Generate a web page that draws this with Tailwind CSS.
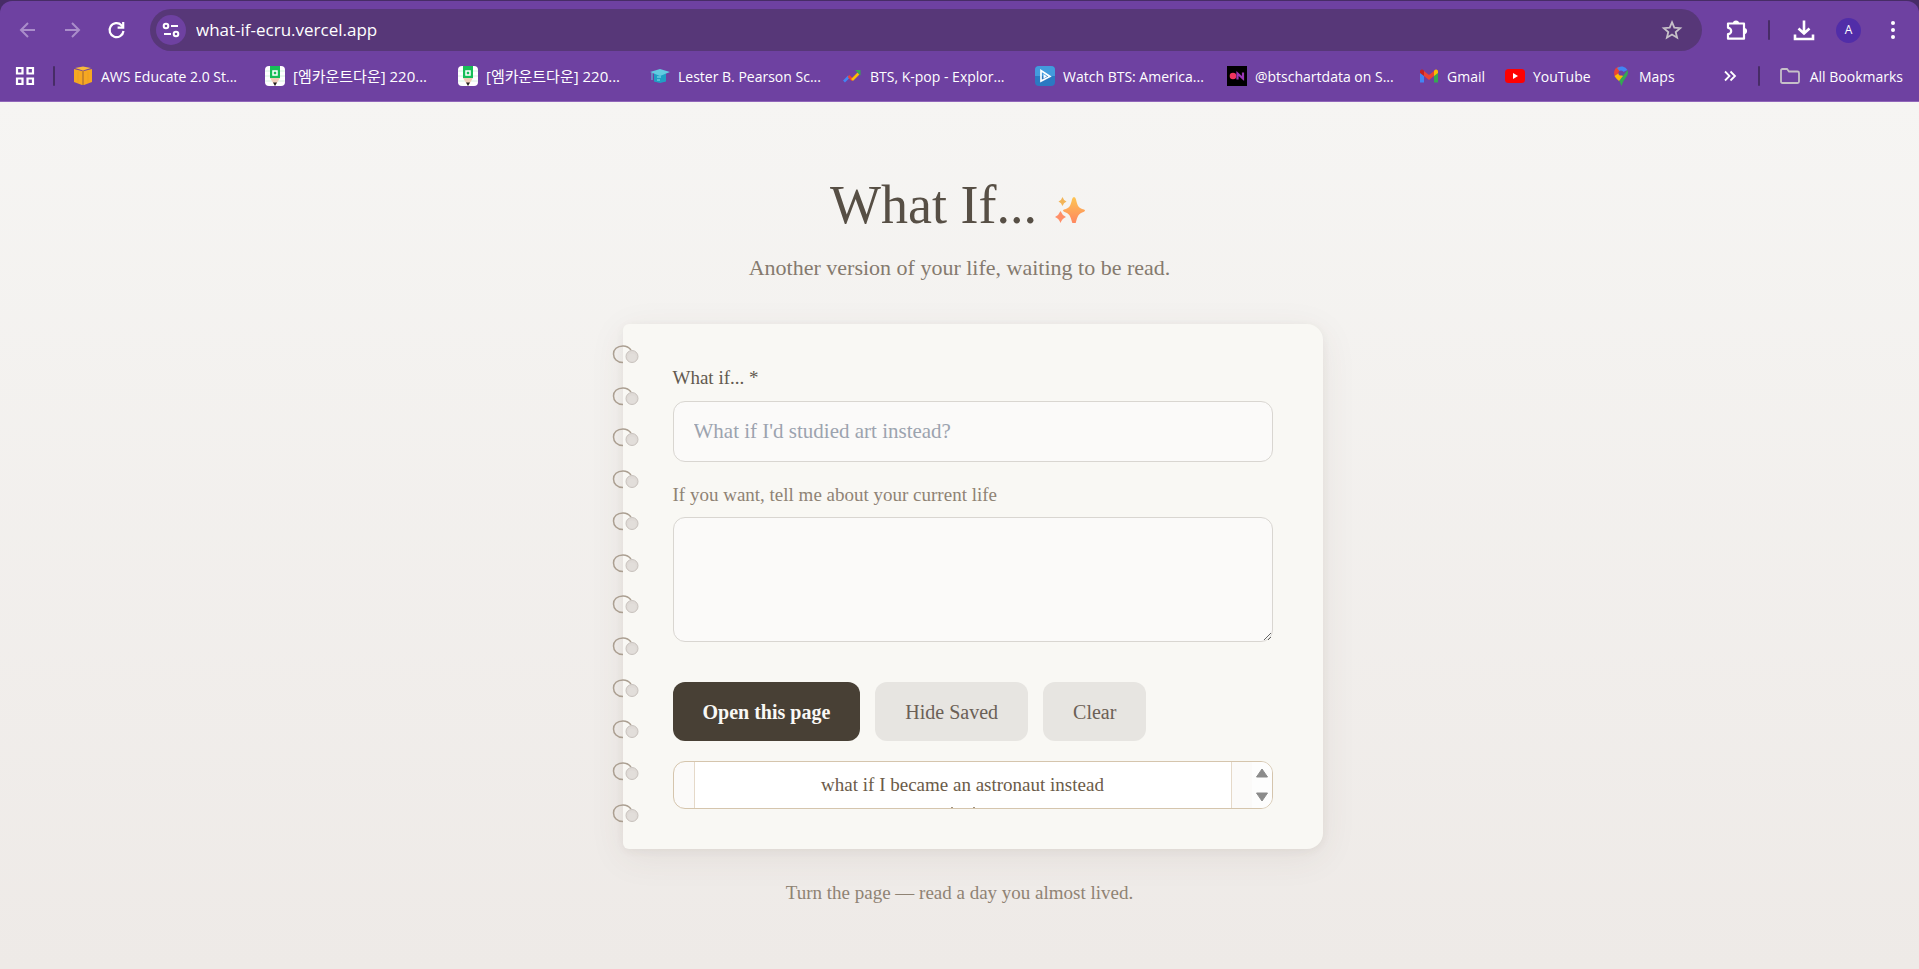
<!DOCTYPE html>
<html lang="en">
<head>
  <meta charset="UTF-8" />
  <meta name="viewport" content="width=device-width, initial-scale=1.0" />
  <title>What If...</title>
  <script src="https://cdn.jsdelivr.net/npm/@tailwindcss/browser@4"></script>
</head>
<body class="min-h-screen flex flex-col overflow-hidden bg-[#f5f4f2]">

  <!-- Browser toolbar -->
  <header class="bg-[#472c66] pt-px text-white font-['Open_Sans','Noto_Sans_CJK_KR',sans-serif]">
    <div class="bg-[#6e41a1] rounded-t-xl border-b border-[#9166ba]">
      <div class="flex items-center h-[58px] pl-4 pr-3.5">
        <button aria-label="Back" class="w-6 h-6 mr-5">
          <svg viewBox="0 0 24 24" class="w-6 h-6" fill="none" stroke="#aa8dca" stroke-width="2"><path d="M19 12H5.500M12 5l-7 7 7 7"/></svg>
        </button>
        <button aria-label="Forward" class="w-6 h-6 mr-5">
          <svg viewBox="0 0 24 24" class="w-6 h-6" fill="none" stroke="#aa8dca" stroke-width="2"><path d="M5 12h13.500M12 5l7 7-7 7"/></svg>
        </button>
        <button aria-label="Reload" class="w-6 h-6 mr-[22px]">
          <svg viewBox="0 0 24 24" class="w-6 h-6" fill="none" stroke="#fff" stroke-width="2.200"><path d="M19.500 13A7 7 0 1 1 17.500 7.200L19 9"/><path d="M19.200 4v5.600h-5.600"/></svg>
        </button>
        <div class="flex-1 flex items-center h-[42px] rounded-full bg-[#573778] px-1.5">
          <button aria-label="Site information" class="w-[30px] h-[30px] rounded-full bg-[#6e41a1] flex items-center justify-center">
            <svg viewBox="0 0 18 18" class="w-[18px] h-[18px]" fill="none" stroke="#fff" stroke-width="2"><circle cx="4" cy="5" r="2.300"/><path d="M9 5h7M2 13h7"/><circle cx="14" cy="13" r="2.300"/></svg>
          </button>
          <input type="text" aria-label="Address" value="what-if-ecru.vercel.app" class="flex-1 ml-2.5 bg-transparent text-[17px] text-white outline-none" />
          <button aria-label="Bookmark this page" class="w-6 h-6 mr-3">
            <svg viewBox="0 0 24 24" class="w-6 h-6" fill="none" stroke="#c6c0c8" stroke-width="1.800"><path d="M12 4.200l2.300 5.400 5.900.5-4.500 3.900 1.400 5.700-5.100-3.100-5.100 3.100 1.400-5.700-4.500-3.900 5.900-.5z"/></svg>
          </button>
        </div>
        <button aria-label="Extensions" class="w-6 h-6 ml-[22px]">
          <svg viewBox="0 0 24 24" class="w-6 h-6" fill="none" stroke="#fff" stroke-width="2.200" stroke-linejoin="round"><path d="M4 5.500h16v15.200H4v-4.500a3.200 3.200 0 0 0 0-6.400z"/><path d="M10 5.500a2 2 0 0 1 4 0M20 11a2 2 0 0 1 0 4" fill="#fff"/></svg>
        </button>
        <span class="w-0.5 h-5 rounded-full bg-[#472c66] ml-5"></span>
        <button aria-label="Downloads" class="w-6 h-6 ml-[22px]">
          <svg viewBox="0 0 24 24" class="w-6 h-6" fill="none" stroke="#fff" stroke-width="2.600"><path d="M12 2.500v13M6.500 10.500l5.500 5 5.500-5M3 16.500v4.500h18v-4.500"/></svg>
        </button>
        <button aria-label="Profile" class="w-[25px] h-[25px] ml-5 rounded-full bg-[#512da8] text-[12px] leading-none">A</button>
        <button aria-label="Menu" class="w-6 h-6 ml-5">
          <svg viewBox="0 0 24 24" class="w-6 h-6" fill="#fff"><circle cx="12" cy="5" r="2"/><circle cx="12" cy="12" r="2"/><circle cx="12" cy="19" r="2"/></svg>
        </button>
      </div>

      <!-- Bookmarks -->
      <nav class="flex items-center h-[42px] pb-2 pl-[15px] pr-4 text-[14px] whitespace-nowrap">
        <button aria-label="Apps" class="w-5 h-5">
          <svg viewBox="0 0 20 20" class="w-5 h-5" fill="none" stroke="#fff" stroke-width="2.200"><path d="M2 2h5.500v5.500H2zM12.500 2H18v5.500h-5.500zM2 12.500h5.500V18H2zM12.500 12.500H18V18h-5.500z"/></svg>
        </button>
        <span class="w-0.5 h-5 rounded-full bg-[#472c66] ml-[18px] mr-[18px]"></span>
        <a href="#" class="w-48 flex items-center gap-2">
          <svg viewBox="0 0 20 20" class="w-5 h-5"><path d="M1 3l8 2v14l-8-3z" fill="#f6a821"/><path d="M19 3l-8 2v14l8-3z" fill="#f6a821"/><path d="M9 4.500h2V19H9z" fill="#c9852b"/><path d="M2 2l8-1.500L18 2l-8 2.500z" fill="#f9b93a"/><path d="M5 5.500v11M15 5.500v11" stroke="#eda022"/></svg>
          AWS Educate 2.0 St...
        </a>
        <a href="#" class="w-[193px] flex items-center gap-2 text-[15px]">
          <svg viewBox="0 0 20 20" class="w-5 h-5"><rect width="20" height="20" rx="4" fill="#fff"/><path d="M0 5h20M0 10h20M0 15h20" stroke="#d5f2df"/><path d="M5 0h10v12H5z" fill="#17bd57"/><path d="M8 5h4v4H8z" fill="none" stroke="#fff" stroke-width="1.500"/><path d="M5 12h10l-5 8z" fill="#f1cdb8"/><path d="M8 16.500h4l-2 3.500z" fill="#222"/></svg>
          [엠카운트다운] 220...
        </a>
        <a href="#" class="w-48 flex items-center gap-2 text-[15px]">
          <svg viewBox="0 0 20 20" class="w-5 h-5"><rect width="20" height="20" rx="4" fill="#fff"/><path d="M0 5h20M0 10h20M0 15h20" stroke="#d5f2df"/><path d="M5 0h10v12H5z" fill="#17bd57"/><path d="M8 5h4v4H8z" fill="none" stroke="#fff" stroke-width="1.500"/><path d="M5 12h10l-5 8z" fill="#f1cdb8"/><path d="M8 16.500h4l-2 3.500z" fill="#222"/></svg>
          [엠카운트다운] 220...
        </a>
        <a href="#" class="w-48 flex items-center gap-2">
          <svg viewBox="0 0 20 20" class="w-5 h-5"><path d="M4 8h12v7.500l-6 1.500-6-1.500z" fill="#1f9fc4"/><path d="M0 6l10-3 10 3-10 4z" fill="#62cbe0"/><path d="M2 7v7" stroke="#62cbe0"/><path d="M7 11h4M7 14h3" stroke="#8ee3ef"/></svg>
          Lester B. Pearson Sc...
        </a>
        <a href="#" class="w-[193px] flex items-center gap-2">
          <svg viewBox="0 0 20 20" class="w-5 h-5" fill="none" stroke-width="2.600"><path d="M2 15.500l5-5" stroke="#4285f4"/><path d="M6.500 10l4 4" stroke="#ea4335"/><path d="M10 14l6.500-6.500" stroke="#fbbc04"/><path d="M13 4h5.500v5.500z" fill="#34a853"/></svg>
          BTS, K-pop - Explor...
        </a>
        <a href="#" class="w-48 flex items-center gap-2">
          <svg viewBox="0 0 20 20" class="w-5 h-5"><rect width="20" height="20" rx="4" fill="#2b79c2"/><path d="M0 4a4 4 0 0 1 4-4h12a4 4 0 0 1 4 4v6H0z" fill="#439bdd"/><path d="M6 4.500v10.500l9-4.500z" fill="none" stroke="#fff" stroke-width="1.700"/><path d="M8.500 8v4.500l3.500-2z" fill="#fff"/></svg>
          Watch BTS: America...
        </a>
        <a href="#" class="w-48 flex items-center gap-2">
          <svg viewBox="0 0 20 20" class="w-5 h-5"><path d="M0 0h20v20H0z" fill="#000"/><circle cx="6" cy="10" r="3.300" fill="#ef355f"/><path d="M10.500 13.500v-6l5.500 5v-6" fill="none" stroke="#9a36b5" stroke-width="2.200"/></svg>
          @btschartdata on S...
        </a>
        <a href="#" class="w-[86px] flex items-center gap-2">
          <svg viewBox="0 0 20 20" class="w-5 h-5"><path d="M1 5v11.500h4V8z" fill="#4285f4"/><path d="M19 5v11.500h-4V8z" fill="#34a853"/><path d="M5 5l5 4 5-4v5l-5 4-5-4z" fill="#ea4335"/><path d="M1 6a2 2 0 0 1 4-1v5L1 7z" fill="#c5221f"/><path d="M19 6a2 2 0 0 0-4-1v5l4-3z" fill="#fbbc04"/></svg>
          Gmail
        </a>
        <a href="#" class="w-[106px] flex items-center gap-2">
          <svg viewBox="0 0 20 20" class="w-5 h-5"><rect y="3" width="20" height="14" rx="3.500" fill="#f00"/><path d="M8 7v6l5-3z" fill="#fff"/></svg>
          YouTube
        </a>
        <a href="#" class="flex items-center gap-2">
          <svg viewBox="0 0 20 20" class="w-5 h-5"><path d="M3 7a7 7 0 0 1 5-6.500L10 7l-5 5q-2-2-2-5z" fill="#ea4335"/><path d="M6 2a7 7 0 0 1 10.500 2L10 7z" fill="#4285f4"/><path d="M16.500 4q1.500 4-2 8-3 4-4 8-1-3-2.500-5z" fill="#34a853"/><path d="M3.500 10L8 7l4 3-4 5q-3-2.500-4.500-5z" fill="#fbbc04"/><circle cx="10" cy="7" r="2.600" fill="#6e41a1"/></svg>
          Maps
        </a>
        <div class="ml-auto flex items-center">
          <button aria-label="More bookmarks" class="w-4 h-4">
            <svg viewBox="0 0 16 16" class="w-4 h-4" fill="none" stroke="#fff" stroke-width="1.800"><path d="M3 3.500L7.500 8 3 12.500M8.500 3.500L13 8l-4.500 4.500"/></svg>
          </button>
          <span class="w-0.5 h-5 rounded-full bg-[#472c66] mx-5"></span>
          <a href="#" class="flex items-center gap-2.5">
            <svg viewBox="0 0 20 20" class="w-5 h-5" fill="none" stroke="#c6c0c8" stroke-width="1.800"><path d="M1 4.500q0-1.500 1.500-1.500H7l2 2.500h8.500q1.500 0 1.500 1.500v8.500q0 1.500-1.500 1.500h-15Q1 17 1 15.500z"/></svg>
            All Bookmarks
          </a>
        </div>
      </nav>
    </div>
  </header>

  <main class="flex-1 flex flex-col items-center bg-linear-to-b from-[#f6f5f3] to-[#eeeae7] pt-[72px] pb-10 font-['Liberation_Serif',serif]">
    <h1 class="flex items-baseline gap-[18px] text-[54px] leading-[62px] text-[#574f45]">
      What If...
      <svg viewBox="0 0 34 26" class="w-[34px] h-[26px]" role="img" aria-label="sparkles">
        <defs>
          <linearGradient id="spark" x1="0" y1="0" x2="0" y2="1"><stop offset="0" stop-color="#fdc552"/><stop offset="1" stop-color="#ff8560"/></linearGradient>
        </defs>
        <path fill="url(#spark)" d="M19 0Q20.500 0 21 2.500C22.500 9 23.500 11 29 12.500Q31 13.500 29 14.700C23.500 16.500 22.500 19 21 25Q20.500 27 19 27T17 25C15.500 19 14.500 16.500 9 14.700Q7 13.500 9 12.500C14.500 11 15.500 9 17 2.500Q17.500 0 19 0z"/>
        <path fill="#f2b457" d="M7.500 0Q8.500 3.500 11.500 4.500 8.500 5.500 7.500 9 6.500 5.500 3.500 4.500 6.500 3.500 7.500 0z"/>
        <path fill="#ff8f68" d="M5.500 14Q7 18 11 20 7 21.500 5.500 26 4 21.500 0 20 4 18 5.500 14z"/>
      </svg>
    </h1>
    <p class="mt-[18px] text-[22px] leading-7 text-[#857a6e]">Another version of your life, waiting to be read.</p>

    <!-- Left padding leaves room for the rings -->
    <div class="mt-[42px] w-full max-w-[726px] pl-[26px]">
      <form class="relative px-[50px] pt-10 pb-10 bg-[#f9f8f4] rounded-l-md rounded-r-2xl shadow-[0_8px_36px_rgba(90,65,50,0.08),0_2px_8px_rgba(90,65,50,0.06)]">
        <!-- Spiral binding -->
        <div id="binding" class="absolute top-0 bottom-0 -left-3 pt-5 pb-6 flex flex-col justify-between"></div>

        <label for="what-if" class="block text-[19px] leading-7 text-[#62584f]">What if... *</label>
        <input id="what-if" type="text" placeholder="What if I'd studied art instead?" class="block w-full h-[61px] mt-[9px] px-5 rounded-xl border border-[#d9d6d1] bg-[#fbfaf9] text-[21px] placeholder:text-[#9ca3af] outline-none" />

        <label for="life" class="block mt-[19px] text-[19px] leading-7 text-[#8f8374]">If you want, tell me about your current life</label>
        <textarea id="life" class="block w-full h-[125px] mt-2 px-5 py-4 rounded-xl border border-[#d9d6d1] bg-[#fbfaf9] text-[21px] resize-y outline-none"></textarea>

        <div class="flex gap-[15px] mt-10 text-[20px]">
          <button type="submit" class="h-[59px] px-[30px] rounded-xl bg-[#484035] text-[#f9f8f4] font-semibold">Open this page</button>
          <button type="button" class="h-[59px] px-[30px] rounded-xl bg-[#e7e5e1] text-[#6b6056]">Hide Saved</button>
          <button type="button" class="h-[59px] px-[30px] rounded-xl bg-[#e7e5e1] text-[#6b6056]">Clear</button>
        </div>

        <!-- Saved pages -->
        <div class="flex h-12 mt-5 rounded-xl border border-[#d5c5ad] bg-[#fbfaf9] overflow-hidden pl-5">
          <div class="flex-1 flex flex-col items-center border-x border-[#e5d9c9] bg-white">
            <p class="h-[45px] text-[19px] leading-[46px] text-[#6b5b49]">what if I became an astronaut instead</p>
            <!-- top edge of the next line -->
            <div class="flex gap-5"><span class="w-0.5 h-px bg-[#a2937f]"></span><span class="w-0.5 h-px bg-[#a2937f]"></span></div>
          </div>
          <div class="flex justify-end w-10">
            <div class="flex flex-col items-center justify-between w-5 py-1.5 bg-[#fdfdfd]">
              <svg viewBox="0 0 14 10" class="w-3.5 h-2.5" fill="#8b8b8b" stroke="#8b8b8b" stroke-linejoin="round"><path d="M7 1l5.500 8h-11z"/></svg>
              <svg viewBox="0 0 14 10" class="w-3.5 h-2.5" fill="#8b8b8b" stroke="#8b8b8b" stroke-linejoin="round"><path d="M7 9l5.500-8h-11z"/></svg>
            </div>
          </div>
        </div>
      </form>
    </div>

    <p class="mt-[30px] text-[19px] leading-7 text-[#8f8374]">Turn the page — read a day you almost lived.</p>
  </main>

  <script>
    const binding = document.getElementById("binding")

    // one ring and its punched hole per row
    binding.innerHTML = Array.from({ length: 12 }, () => `
      <svg viewBox="0 0 30 22" class="w-[30px] h-[22px]" fill="none" aria-hidden="true">
        <path d="M12 18.500C6 18.500 2.500 14.500 2.500 10S6 2 12 2Q17 2 20 6" stroke="#ab9f91" stroke-width="1.500"/>
        <circle cx="21" cy="12.500" r="6" fill="#dfdad6" stroke="#c8c2bd"/>
        <circle cx="21" cy="13.500" r="4" fill="#e2deda"/>
      </svg>
    `).join("")
  </script>
</body>
</html>
